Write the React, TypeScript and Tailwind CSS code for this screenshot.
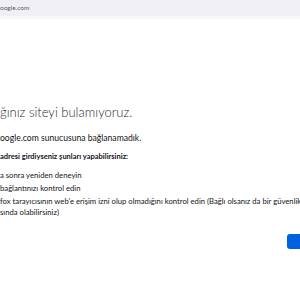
import React from "react";

export default function App() {
  const font = { fontFamily: 'Lato, "Noto Sans", Arial, sans-serif' };
  return (
    <div className="w-[300px] h-[300px] bg-white overflow-hidden relative" style={font}>
      <div className="h-[16px] bg-[#f0f0f4] flex items-center">
        <span className="text-[6.5px] leading-none text-[#5b5b66] whitespace-nowrap">oogle.com</span>
      </div>
      <div className="h-[3px] bg-[#f7f7f9]" />
      <div className="pt-[83px] whitespace-nowrap text-[#15141a] overflow-hidden">
        <h1 className="text-[13px] leading-[20px] font-light text-[#2b2a33]">ğınız siteyi bulamıyoruz.</h1>
        <p className="mt-[10px] text-[8.6px] leading-[12px]">oogle.com sunucusuna bağlanamadık.</p>
        <p className="mt-[7px] text-[7.5px] leading-[12px] font-bold">adresi girdiyseniz şunları yapabilirsiniz:</p>
        <ul className="mt-[7px] text-[7.7px] leading-[10px] flex flex-col gap-[3px]">
          <li>a sonra yeniden deneyin</li>
          <li>bağlantınızı kontrol edin</li>
          <li className="leading-[10.5px]">
            <div>fox tarayıcısının web'e erişim izni olup olmadığını kontrol edin (Bağlı olsanız da bir güvenlik</div>
            <div>sında olabilirsiniz)</div>
          </li>
        </ul>
        <div className="flex justify-end mt-[17px]">
          <div className="w-[13px] h-[15px] bg-[#0061e0] rounded-l-[3px]" />
        </div>
      </div>
    </div>
  );
}
